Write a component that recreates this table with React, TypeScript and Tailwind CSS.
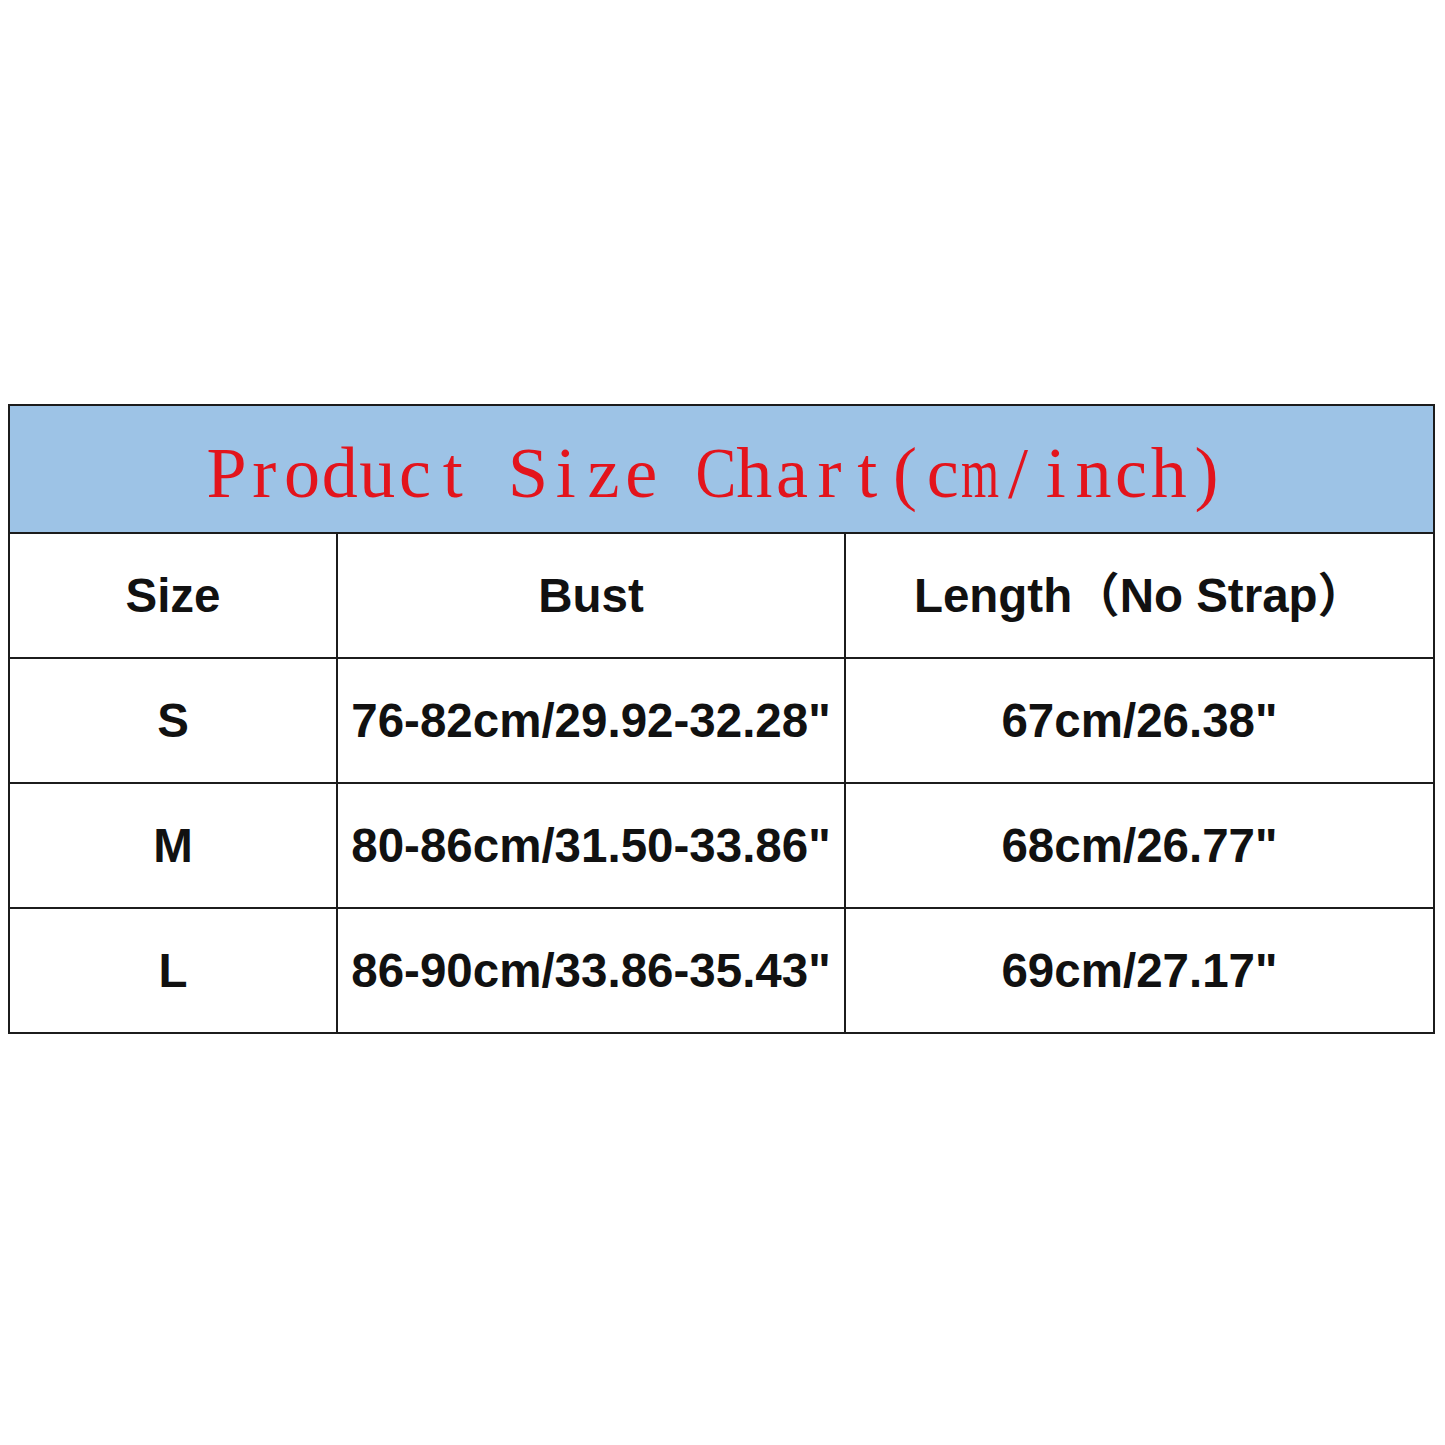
const title = "Product Size Chart(cm/inch)";

const rows = [
  { size: "S", bust: "76-82cm/29.92-32.28\"", length: "67cm/26.38\"" },
  { size: "M", bust: "80-86cm/31.50-33.86\"", length: "68cm/26.77\"" },
  { size: "L", bust: "86-90cm/33.86-35.43\"", length: "69cm/27.17\"" },
];

const cellText =
  "font-['Liberation_Sans','Noto_Sans_CJK_SC',sans-serif] font-bold text-[47.5px] text-[#111] leading-none";

// wide glyphs get squeezed into the fixed cell like the original monospace title
function glyphClass(ch: string) {
  if (ch === "m") return "inline-block scale-x-[0.68]";
  if (ch === "C") return "inline-block scale-x-[0.85]";
  return "inline-block";
}

function Row({ cells, last }: { cells: string[]; last?: boolean }) {
  return (
    <div
      className={`grid grid-cols-[326px_2px_506px_2px_1fr] ${
        last ? "h-[123px]" : "h-[125px] border-b-2 border-[#1c1c1c]"
      }`}
    >
      <div className={`flex items-center justify-center ${cellText}`}>{cells[0]}</div>
      <div className="bg-[#1c1c1c]" />
      <div className={`flex items-center justify-center ${cellText}`}>{cells[1]}</div>
      <div className="bg-[#1c1c1c]" />
      <div className={`flex items-center justify-center ${cellText}`}>{cells[2]}</div>
    </div>
  );
}

export default function App() {
  return (
    <div className="w-[1445px] h-[1445px] bg-white pt-[404px] pl-[8px]">
      <div className="w-[1427px] border-2 border-[#1c1c1c]">
        {/* Title bar */}
        <div className="h-[128px] bg-[#9dc3e6] border-b-2 border-[#1c1c1c] flex items-center justify-center pr-[10px] pt-[8px]">
          <div className="flex font-['Liberation_Serif',serif] text-[72px] text-[#e3141c] leading-none">
            {title.split("").map((ch, i) => (
              <span key={i} className="w-[37.7px] inline-flex justify-center">
                <span className={glyphClass(ch)}>{ch === " " ? "\u00a0" : ch}</span>
              </span>
            ))}
          </div>
        </div>

        <Row cells={["Size", "Bust", "Length（No Strap）"]} />
        {rows.map((r, i) => (
          <Row key={r.size} cells={[r.size, r.bust, r.length]} last={i === rows.length - 1} />
        ))}
      </div>
    </div>
  );
}
